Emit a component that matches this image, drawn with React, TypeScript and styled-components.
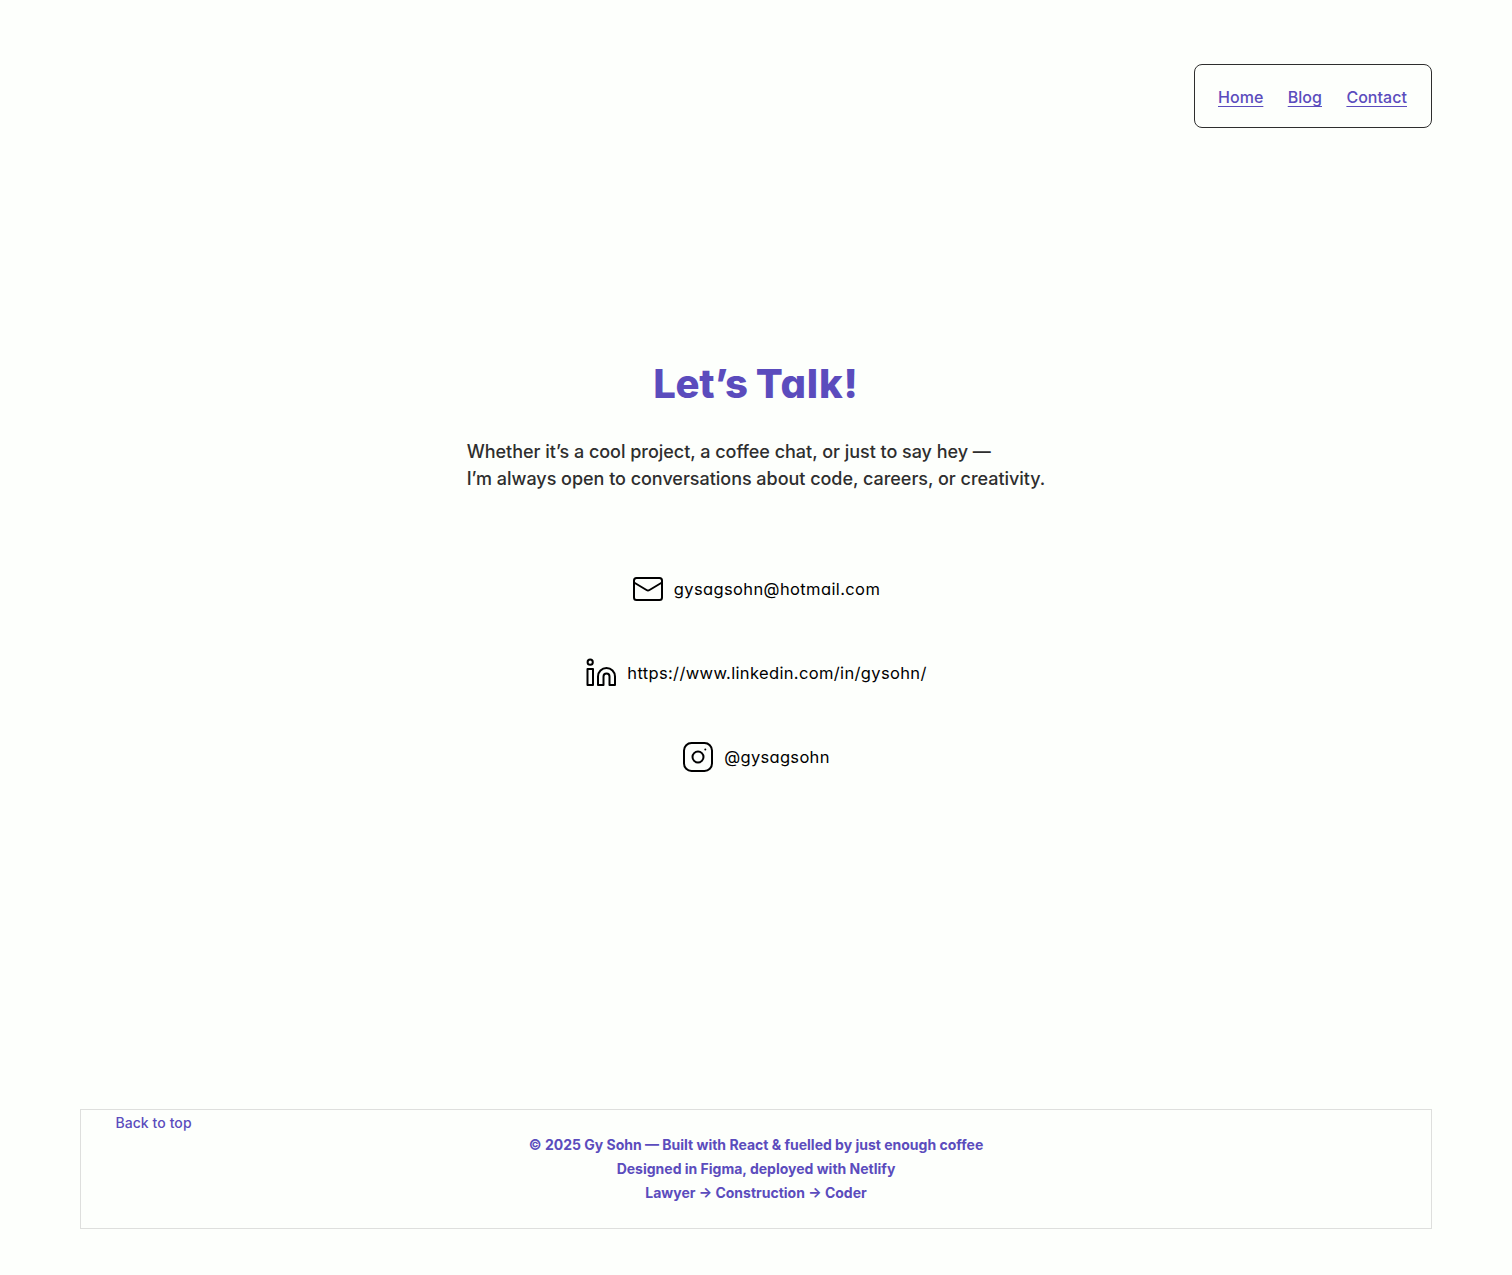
import React from "react";
import styled, { createGlobalStyle } from "styled-components";

const GlobalStyle = createGlobalStyle`
  * { box-sizing: border-box; }
  body { margin: 0; background: #fdfffc; font-family: "Inter", sans-serif; color: #2e2e2e; }
`;

const Page = styled.div`
  display: flex;
  flex-direction: column;
  height: 1275px;
  padding: 64px 80px 46px;
`;

const Header = styled.header`
  display: flex;
  justify-content: flex-end;
`;

const Nav = styled.nav`
  display: flex;
  align-items: center;
  justify-content: space-between;
  width: 238px;
  height: 64px;
  padding: 2px 24px 0 23px;
  border: 1px solid #2e2e2e;
  border-radius: 8px;
`;

const NavLink = styled.a`
  font-size: 16px;
  line-height: 24px;
  font-weight: 500;
  letter-spacing: 0.04px;
  color: #5b4cbd;
  text-decoration: underline;
  text-underline-offset: 3px;
`;

const Main = styled.main`
  display: flex;
  flex-direction: column;
  align-items: center;
  flex: 1;
  padding-top: 226px;
`;

const Title = styled.h1`
  margin: 0;
  font-size: 40px;
  line-height: 60px;
  font-weight: 800;
  letter-spacing: -0.4px;
  color: #5b4cbd;
  font-feature-settings: "cv11";
`;

const TitleEnd = styled.span`
  letter-spacing: 0.8px;
`;

const Intro = styled.p`
  margin: 24px 0 0;
  font-size: 18px;
  line-height: 27px;
  font-weight: 500;
  letter-spacing: -0.03px;
`;

const Contacts = styled.ul`
  display: flex;
  flex-direction: column;
  align-items: center;
  gap: 52px;
  margin: 81px 0 0;
  padding: 0;
  list-style: none;
`;

const Contact = styled.li`
  display: flex;
  align-items: center;
  gap: 10px;
  height: 32px;
`;

const ContactIcon = styled.svg`
  width: 32px;
  height: 32px;
  fill: none;
  stroke: #000;
  stroke-width: 2;
  stroke-linejoin: round;
`;

const ContactText = styled.span<{ $spacing: number }>`
  font-size: 16.5px;
  line-height: 24px;
  color: #000;
  letter-spacing: ${(p) => p.$spacing}px;
  font-feature-settings: "cv11";
`;

const Footer = styled.footer`
  height: 120px;
  border: 1px solid #dedfdd;
  color: #5b4cbd;
`;

const BackToTop = styled.a`
  display: block;
  width: max-content;
  margin-left: 34.4px;
  padding-top: 2px;
  font-size: 14px;
  line-height: 21px;
  font-weight: 500;
  letter-spacing: 0.08px;
`;

const Credits = styled.div`
  text-align: center;
  font-size: 14px;
  line-height: 24px;
  font-weight: 700;
`;

export default function App() {
  return (
    <Page>
      <GlobalStyle />
      <Header>
        <Nav>
          <NavLink>Home</NavLink>
          <NavLink>Blog</NavLink>
          <NavLink>Contact</NavLink>
        </Nav>
      </Header>
      <Main>
        <Title>
          Let’s <TitleEnd>Talk!</TitleEnd>
        </Title>
        <Intro>
          Whether it’s a cool project, a coffee chat, or just to say hey —<br />
          I’m always open to conversations about code, careers, or creativity.
        </Intro>
        <Contacts>
          <Contact>
            <ContactIcon viewBox="0 0 32 32">
              <rect x="2" y="5" width="28" height="22" rx="2.5" />
              <path d="M2 9.5 14.500 17a3 3 0 0 0 3 0L30 9.5" />
            </ContactIcon>
            <ContactText $spacing={0.38}>gysagsohn@hotmail.com</ContactText>
          </Contact>
          <Contact>
            <ContactIcon viewBox="0 0 32 32">
              <circle cx="5.2" cy="5.2" r="2.6" />
              <path d="M2.5 12h5.500v16h-5.500zM13 28V19.500a8.500 8.500 0 0 1 17 0V28h-5.500V19.500a3 3 0 0 0-6 0V28z" />
            </ContactIcon>
            <ContactText $spacing={0.35}>https://www.linkedin.com/in/gysohn/</ContactText>
          </Contact>
          <Contact>
            <ContactIcon viewBox="0 0 32 32">
              <rect x="2" y="2" width="28" height="28" rx="7.5" />
              <circle cx="16" cy="16" r="5.5" />
              <circle cx="23.300" cy="8.500" r="1" fill="#000" stroke="none" />
            </ContactIcon>
            <ContactText $spacing={0.3}>@gysagsohn</ContactText>
          </Contact>
        </Contacts>
      </Main>
      <Footer>
        <BackToTop>Back to top</BackToTop>
        <Credits>
          <div>© 2025 Gy Sohn — Built with React &amp; fuelled by just enough coffee</div>
          <div>Designed in Figma, deployed with Netlify</div>
          <div>Lawyer → Construction → Coder</div>
        </Credits>
      </Footer>
    </Page>
  );
}
